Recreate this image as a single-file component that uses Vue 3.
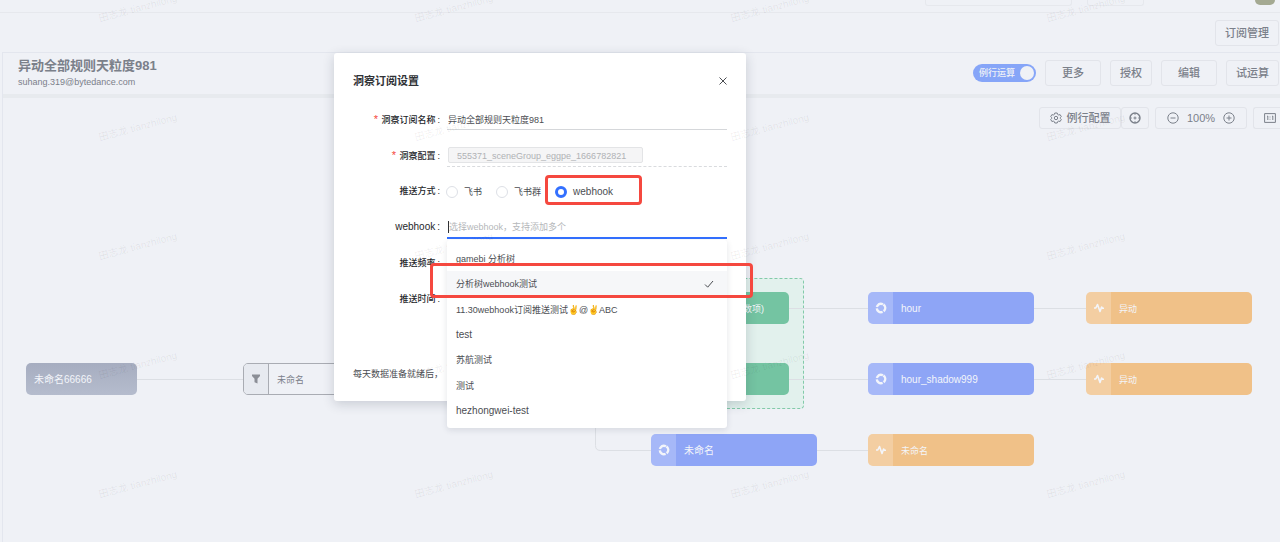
<script setup>
import { ref } from 'vue'

const pushType = ref('webhook')
const name = ref('异动全部规则天粒度981')
const pushTypes = [
  { value: 'feishu', label: '飞书' },
  { value: 'group', label: '飞书群' },
  { value: 'webhook', label: 'webhook' },
]
const options = ['gamebi 分析树', '分析树webhook测试', '11.30webhook订阅推送测试✌@✌ABC', 'test', '苏航测试', '测试', 'hezhongwei-test']
const selected = ref(1)
const parts = (text) => text.split(/(✌)/)
const isLatin = (text) => /^[\w-]+$/.test(text)

const nodes = [
  { kind: 'root', x: 26, y: 363, w: 111, text: '未命名66666' },
  { kind: 'filter', x: 243, y: 363, w: 166, text: '未命名' },
  { kind: 'green', x: 651, y: 292, w: 138, text: '数项)' },
  { kind: 'green', x: 651, y: 363, w: 138, text: '' },
  { kind: 'blue', x: 868, y: 292, w: 166, text: 'hour' },
  { kind: 'blue', x: 868, y: 363, w: 166, text: 'hour_shadow999' },
  { kind: 'blue', x: 651, y: 434, w: 166, text: '未命名' },
  { kind: 'orange', x: 1086, y: 292, w: 166, text: '异动' },
  { kind: 'orange', x: 1086, y: 363, w: 166, text: '异动' },
  { kind: 'orange', x: 868, y: 434, w: 166, text: '未命名' },
]
const place = (n) => ({ left: n.x + 'px', top: n.y + 'px', width: n.w + 'px' })
</script>

<template>
  <div class="page">
    <header class="topbar">
      <span class="search"></span>
      <span class="picker"></span>
      <span class="avatar"></span>
    </header>

    <div class="subbar"><button class="btn">订阅管理</button></div>

    <main class="panel">
      <div class="panel-head">
        <div class="heading">
          <h1>异动全部规则天粒度981</h1>
          <p>suhang.319@bytedance.com</p>
        </div>
        <div class="actions">
          <button class="switch" role="switch" aria-checked="true"><span>例行运算</span><i></i></button>
          <button class="btn wide">更多</button>
          <button class="btn">授权</button>
          <button class="btn wide">编辑</button>
          <button class="btn">试运算</button>
        </div>
      </div>

      <div class="toolbar">
        <div class="pair">
          <button class="tool config">
            <svg viewBox="0 0 12 12" width="12" height="12"><path d="M4.8 1h2.4l.4 1.4 1.1.6 1.4-.4 1.2 2.1-1 1v.7l1 1-1.2 2.1-1.4-.4-1.1.6L7.2 11H4.8l-.4-1.3-1.1-.6-1.4.4L.7 7.400l1-1v-.7l-1-1 1.200-2.100 1.400.4 1.100-.6z" /><circle cx="6" cy="6" r="1.700" /></svg>
            例行配置
          </button>
          <button class="tool target" aria-label="定位">
            <svg viewBox="0 0 12 12" width="12" height="12"><circle cx="6" cy="6" r="5" class="rim" /><circle cx="6" cy="6" r="1" /><path d="M6 1v1.800M6 9.200V11M1 6h1.800M9.200 6H11" /></svg>
          </button>
        </div>
        <div class="tool zoom">
          <button aria-label="缩小"><svg viewBox="0 0 12 12" width="12" height="12"><circle cx="6" cy="6" r="5.200" /><path d="M3.500 6h5" /></svg></button>
          <span>100%</span>
          <button aria-label="放大"><svg viewBox="0 0 12 12" width="12" height="12"><circle cx="6" cy="6" r="5.200" /><path d="M3.500 6h5M6 3.500v5" /></svg></button>
        </div>
        <button class="tool fit" aria-label="原始大小">
          <svg viewBox="0 0 12 12" width="12" height="12"><path d="M.6 1.600h10.800v8.800H.6zM3 4.500l.8-.5v4M8 4.500l.8-.5v4M6 4.600v.8M6 6.800v.8" /></svg>
        </button>
      </div>
    </main>

    <section class="canvas" aria-label="分析树">
      <div class="group"></div>
      <svg class="edges" width="1280" height="542">
        <path d="M137 379.500H243M789 308.500H868M789 379.500H868M1034 308.500H1086M1034 379.500H1086M817 450.500H868M595.500 400V445.500Q595.500 450.500 600.500 450.500H651" />
      </svg>
      <div v-for="(n, i) in nodes" :key="i" class="node" :class="n.kind" :style="place(n)">
        <span v-if="n.kind !== 'root' && n.kind !== 'green'" class="badge">
          <svg v-if="n.kind === 'filter'" viewBox="0 0 12 12" width="12" height="12"><path class="funnel" d="M2 1.500h8v1.400L7.500 5.700v4.800l-3-1.300V5.700L2 2.900z" /></svg>
          <svg v-else-if="n.kind === 'blue'" viewBox="0 0 12 12" width="12" height="12"><circle class="ring" cx="6" cy="6" r="4.200" transform="rotate(-55 6 6)" /></svg>
          <svg v-else viewBox="0 0 12 12" width="12" height="12"><path class="pulse" d="M1 6h1.800L4.500 2.500 7 9.500 8.600 5l.9 1.300H11" /></svg>
        </span>
        <span class="text">{{ n.text }}</span>
      </div>
    </section>

    <section class="modal" role="dialog" aria-labelledby="modal-title">
      <header class="modal-head">
        <h2 id="modal-title">洞察订阅设置</h2>
        <button class="close" aria-label="关闭"><svg viewBox="0 0 10 10" width="10" height="10"><path d="M1.500 1.500l7 7M8.500 1.500l-7 7" /></svg></button>
      </header>
      <form @submit.prevent>
        <div class="row">
          <label class="label" for="name"><b>*</b> 洞察订阅名称<em>:</em></label>
          <input id="name" v-model="name" class="field" type="text" />
        </div>
        <div class="row">
          <label class="label" for="config"><b>*</b> 洞察配置<em>:</em></label>
          <div class="field locked"><input id="config" class="tag" disabled value="555371_sceneGroup_eggpe_1666782821" /></div>
        </div>
        <div class="row">
          <span id="push-type" class="label">推送方式<em>:</em></span>
          <div class="radios" role="radiogroup" aria-labelledby="push-type">
            <label v-for="t in pushTypes" :key="t.value" :class="{ latin: isLatin(t.label) }"><input v-model="pushType" type="radio" name="type" :value="t.value" />{{ t.label }}</label>
          </div>
        </div>
        <div class="row">
          <label class="label latin" for="hook">webhook<em>:</em></label>
          <div class="field active"><i class="caret"></i><input id="hook" type="text" placeholder="选择webhook，支持添加多个" /></div>
          <ul class="menu" role="listbox">
            <li v-for="(o, i) in options" :key="o" role="option" :aria-selected="i === selected" :class="{ on: i === selected, latin: isLatin(o) }" @click="selected = i">
              <span><template v-for="(p, k) in parts(o)" :key="k"><i v-if="p === '✌'" class="hand">✌</i><template v-else>{{ p }}</template></template></span>
              <svg v-if="i === selected" viewBox="0 0 10 10" width="10" height="10"><path d="M1 5.500l2.700 2.700L9 2" /></svg>
            </li>
          </ul>
        </div>
        <div class="row"><span class="label">推送频率<em>:</em></span></div>
        <div class="row"><span class="label">推送时间<em>:</em></span></div>
      </form>
      <p class="note">每天数据准备就绪后，</p>
    </section>

    <div class="marks" aria-hidden="true">
      <span v-for="n in 20" :key="n">田志龙 tianzhilong</span>
    </div>
    <div class="callout callout-type"></div>
    <div class="callout callout-option"></div>
  </div>
</template>

<style>
body { background: #eff1f6; }
</style>

<style scoped>
* { box-sizing: border-box; }
.page {
  position: relative;
  min-height: 100vh;
  overflow: hidden;
  background: #eff1f6;
  color: #7b808a;
  font: 9px/14px "Liberation Sans", "Noto Sans CJK SC", sans-serif;
}
h1, h2, p, ul { margin: 0; padding: 0; }
button, input { font: inherit; color: inherit; background: none; border: 0; margin: 0; padding: 0; }
i, em { font-style: normal; }
svg { display: block; fill: none; stroke: currentColor; }
.latin { font-size: 10px; }

.topbar { display: flex; justify-content: flex-end; height: 13px; padding-right: 5px; border-bottom: 1px solid #e6e8ed; }
.search, .picker { height: 6px; border: 1px solid #e6e8ed; border-top: 0; border-radius: 0 0 3px 3px; }
.search { width: 147px; margin-right: 15px; }
.picker { width: 57px; margin-right: 111px; }
.avatar { width: 20px; height: 5px; border-radius: 0 0 10px 10px; background: #a4a992; }
.subbar { display: flex; justify-content: flex-end; align-items: center; height: 39px; padding-right: 1px; }
.btn { height: 26px; padding: 0 9px; border: 1px solid #e2e4ea; border-radius: 3px; font-size: 11px; font-weight: 500; }
.btn.wide { padding: 0 16px; }
.panel { margin-left: 2px; border: solid #e3e6ee; border-width: 1px 0 0 1px; min-height: 490px; }
.panel-head { display: flex; justify-content: space-between; align-items: center; height: 45px; padding: 2px 1px 4px 15px; border-bottom: 4px solid #e7eaee; }
.heading h1 { font-size: 13px; line-height: 18px; font-weight: 700; }
.heading p { line-height: 14px; }
.actions { display: flex; align-items: center; gap: 9px; }
.switch { display: flex; align-items: center; justify-content: space-between; width: 63px; height: 18px; padding: 0 2px 0 6px; border-radius: 9px; background: #86a5f8; color: #eff1f6; font-weight: 500; }
.switch i { width: 14px; height: 14px; border-radius: 50%; background: #eff1f6; }
.toolbar { display: flex; justify-content: flex-end; gap: 6px; padding-top: 9px; }
.pair { display: flex; }
.tool { display: flex; align-items: center; justify-content: center; height: 22px; border: 1px solid #e2e4ea; border-radius: 3px; font-size: 11px; font-weight: 500; }
.config { gap: 5px; width: 82px; }
.target { width: 28px; }
.rim { stroke-width: 1.400; }
.zoom { gap: 8px; width: 92px; }
.fit { width: 27px; padding-left: 5px; border-right: 0; border-radius: 3px 0 0 3px; }

.canvas { position: absolute; inset: 0; }
.edges { position: absolute; left: 0; top: 0; stroke: #dcdfe4; }
.group { position: absolute; left: 640px; top: 278px; width: 164px; height: 131px; border: 1px dashed #82caa9; border-radius: 4px; background: #e2f1ed; }
.node { position: absolute; display: flex; align-items: center; height: 32px; border-radius: 5px; overflow: hidden; color: #f3f5fa; }
.node .text { padding: 2px 0 0 8px; }
.badge { display: flex; align-items: center; justify-content: center; width: 25px; height: 100%; background: #ffffff38; }
.root { background: linear-gradient(#a6adc0, #b5bccd); font-size: 10px; }
.filter { border: 1px solid #a9acb3; color: #7b808a; }
.filter .badge { border-right: 1px solid #a9acb3; background: #e7eaf0; }
.green { justify-content: flex-end; padding-right: 25px; background: #74c4a2; }
.blue { background: #8ea5f6; font-size: 10px; }
.orange { background: #f0c188; }
.ring { stroke-width: 2.400; stroke-dasharray: 7.600 1.196; }
.pulse { stroke-width: 1.600; stroke-linejoin: round; }
.funnel { fill: #8b8e96; stroke: none; }

.modal { position: absolute; left: 334px; top: 53px; width: 412px; padding: 8px 19px 20px; border-radius: 3px; background: #fff; box-shadow: 0 3px 12px #20284030; color: #4b4d52; }
.modal-head { display: flex; justify-content: space-between; align-items: center; height: 40px; }
.modal-head h2 { font-size: 11px; line-height: 16px; font-weight: 700; color: #303236; }
.close { padding: 0; margin-right: -1px; }
.row { position: relative; display: grid; grid-template-columns: 88px 1fr; column-gap: 6px; align-items: center; height: 36px; }
.label { text-align: right; color: #25272b; font-weight: 500; white-space: nowrap; }
.label b { margin-right: 1px; color: #f5483b; font-size: 11px; font-weight: 400; }
.label em { padding: 0 1px 0 2px; }
.field { width: 100%; height: 22px; border-bottom: 1px solid #d5d7da; outline: 0; padding: 1px 0 0 1px; }
.locked { display: flex; align-items: center; height: 24px; border-bottom: 1px dashed #d9dbde; }
.tag { width: 195px; height: 16px; padding: 1px 8px 0; border: 1px solid #e3e4e6; border-radius: 2px; background: #f5f5f6; color: #b0b2b5; }
.radios { display: flex; gap: 14px; margin-left: -1px; padding-top: 2px; }
.radios label { display: flex; align-items: center; gap: 6px; }
.radios input { appearance: none; width: 12px; height: 12px; border: 1px solid #dde0e6; border-radius: 50%; background: #fff; }
.radios input:checked { border: 3px solid #3370ff; }
.active { display: flex; align-items: center; height: 24px; border-bottom: 2px solid #3370ff; }
.active input { flex: 1; outline: 0; }
.active input::placeholder { color: #b5b7ba; opacity: 1; }
.caret { width: 1px; height: 12px; background: #303236; }
.menu { position: absolute; z-index: 10; left: 94px; right: 0; top: 31px; height: 188px; padding: 6px 0 4px; display: flex; flex-direction: column; border-radius: 3px; background: #fff; box-shadow: 0 2px 6px #2028401f; list-style: none; }
.menu li { flex: 1; display: flex; align-items: center; justify-content: space-between; padding: 0 13px 0 9px; }
.menu li.on { background: #f6f7f9; }
.hand { color: #f3b63f; }
.note { margin-top: 50px; line-height: 14px; }

.marks { position: absolute; z-index: 5; left: 99px; top: 12px; display: grid; grid-template-columns: repeat(4, 316px); grid-auto-rows: 119px; pointer-events: none; color: #1f232914; font-size: 10px; }
.marks span { justify-self: start; align-self: start; white-space: nowrap; transform: rotate(-15deg); transform-origin: left center; }
.callout { position: absolute; z-index: 20; border: 3px solid #f5483f; border-radius: 4px; pointer-events: none; }
.callout-type { left: 545px; top: 175px; width: 97px; height: 30px; }
.callout-option { left: 430px; top: 263px; width: 323px; height: 35px; }
</style>
